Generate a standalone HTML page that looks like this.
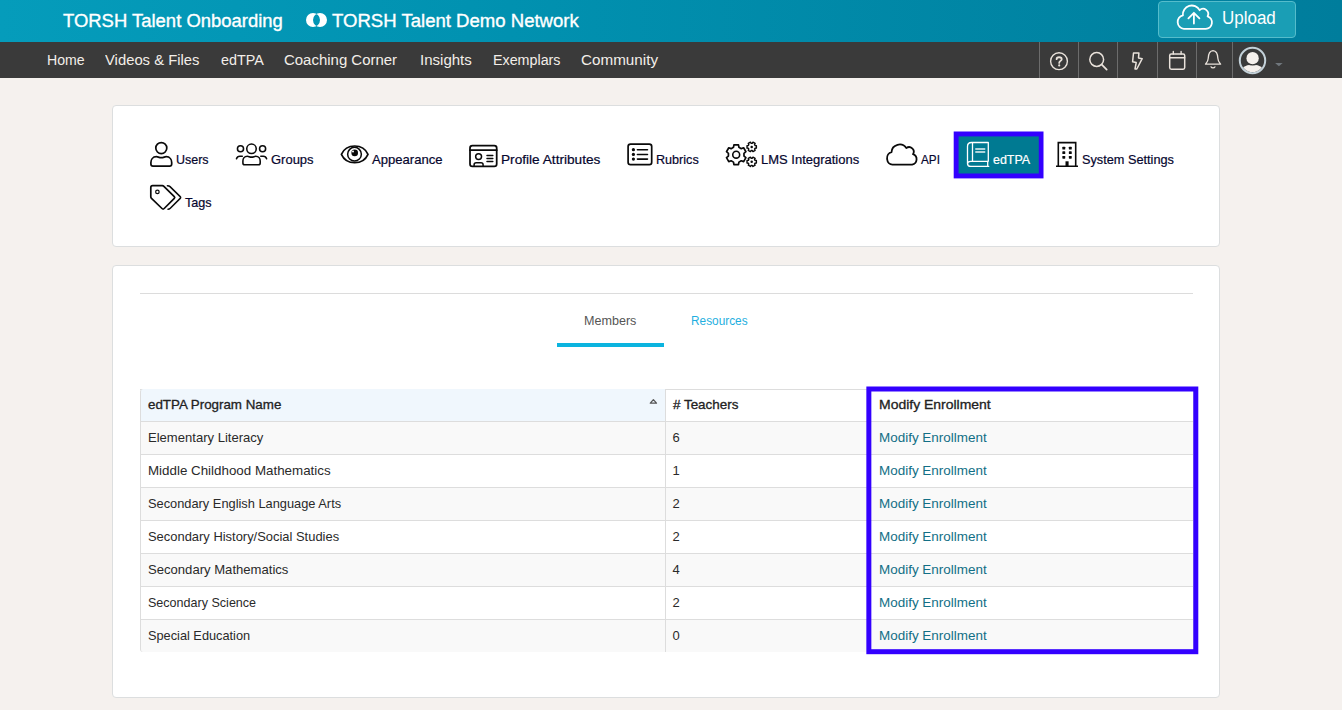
<!DOCTYPE html>
<html><head><meta charset="utf-8"><title>TORSH Talent</title>
<style>
html,body{margin:0;padding:0}
body{width:1342px;height:710px;overflow:hidden;position:relative;background:#f5f1ee;font-family:"Liberation Sans",sans-serif}
.abs,.t,svg{position:absolute}
.t{white-space:pre;transform-origin:0 0}
#top{left:0;top:0;width:1342px;height:42px;background:linear-gradient(90deg,#059cbb 0%,#0192b1 35%,#007d9c 100%)}
#nav{left:0;top:42px;width:1342px;height:36px;background:#3a3a3a}
.card{background:#fff;border:1px solid #dcdedf;border-radius:4px;box-sizing:border-box}
#c1{left:112px;top:105px;width:1108px;height:142px}
#c2{left:112px;top:265px;width:1108px;height:433px}
#upload{left:1158px;top:1px;width:138px;height:37px;box-sizing:border-box;background:#1a9eb5;border:1px solid #55bccb;border-radius:4px}
.vd{top:42px;width:1px;height:36px;background:#6c6c6c}
#hr{left:140px;top:293px;width:1053px;height:1px;background:#dcdcdc}
#tabu{left:557px;top:343px;width:107px;height:4px;background:#0bb4df}
#sel{left:954px;top:132px;width:90px;height:47px;box-sizing:border-box;background:#0a7f95;border:4px solid #3407f5}
#hl{left:867px;top:387px;width:332px;height:267px;box-sizing:border-box;border:4px solid #3407f5}
.row{left:140px;width:1053px;height:33px;box-sizing:border-box;border-top:1px solid #ddd;border-left:1px solid #ddd}
.cv{width:1px;background:#ddd;top:389px;height:263px}
</style></head><body>
<div id="top" class="abs"></div>
<div id="nav" class="abs"></div>
<div id="upload" class="abs"></div>
<div class="abs vd" style="left:1039px"></div><div class="abs vd" style="left:1078px"></div><div class="abs vd" style="left:1117px"></div>
<div class="abs vd" style="left:1157px"></div><div class="abs vd" style="left:1196px"></div><div class="abs vd" style="left:1232px"></div>
<div id="c1" class="abs card"></div>
<div id="c2" class="abs card"></div>
<div id="hr" class="abs"></div>
<div id="tabu" class="abs"></div>
<!-- table -->
<div class="abs" style="left:140px;top:389px;width:1053px;height:32px;background:#fff;border-top:1px solid #ddd;box-sizing:border-box"></div>
<div class="abs" style="left:140px;top:389px;width:525px;height:32px;background:#f0f7fd;border-left:1px solid #ddd;border-top-left-radius:3px;box-sizing:border-box"></div>
<div class="abs row" style="top:421px;background:#f9f9f9"></div>
<div class="abs row" style="top:454px;background:#fff"></div>
<div class="abs row" style="top:487px;background:#f9f9f9"></div>
<div class="abs row" style="top:520px;background:#fff"></div>
<div class="abs row" style="top:553px;background:#f9f9f9"></div>
<div class="abs row" style="top:586px;background:#fff"></div>
<div class="abs row" style="top:619px;background:#f9f9f9;border-bottom-left-radius:3px"></div>
<div class="abs cv" style="left:665px"></div>
<div class="abs cv" style="left:868px"></div>
<div class="abs cv" style="left:1193px"></div>
<svg class="abs" style="left:0;top:0" width="1342" height="710" viewBox="0 0 1342 710" fill="none" stroke-linecap="round" stroke-linejoin="round">
<rect x="953.7" y="131.5" width="89.8" height="46.9" fill="#3300ff"/><rect x="958.6" y="136.4" width="80.2" height="37.1" fill="#007a92"/>
<rect x="868.85" y="389" width="326.95" height="262.7" stroke="#3300ff" stroke-width="5" stroke-linejoin="miter"/>
<path fill="#fff" fill-rule="evenodd" d="M306 20a7 7 0 1 0 14 0a7 7 0 1 0 -14 0Z M313 20a7 7 0 1 0 14 0a7 7 0 1 0 -14 0Z"/>
<g stroke="#fff" stroke-width="1.8"><path d="M1183.9 28.8 A6.3 6.8 0 0 1 1182.9 15.3 A8.9 8.9 0 0 1 1199.6 10.2 A5.1 5.1 0 0 1 1207.6 16.3 A6.2 6.4 0 0 1 1205.8 28.8 Z"/><path d="M1193.9 23.6 V13 M1188.4 18.3 L1193.9 12.8 L1199.4 18.3"/></g>
<g stroke="#e9e2db" stroke-width="1.4">
<circle cx="1059" cy="61.2" r="8.4"/>
<path d="M1056.6 59.2 C1056.6 56.6 1061.7 56.6 1061.7 59.2 C1061.7 60.9 1059.2 60.9 1059.2 62.9" stroke-width="1.8"/>
<circle cx="1059.2" cy="65.4" r="1.1" fill="#e9e2db" stroke="none"/>
<circle cx="1096.7" cy="59.5" r="6.9" stroke-width="1.5"/><path d="M1101.8 64.6 L1106.7 69.7" stroke-width="1.7"/>
<path d="M1133.5 53 H1138.9 L1138.5 57.9 L1142.2 58.7 L1136.8 69 H1135 L1136.2 62.6 L1132.6 61.8 Z" stroke-width="1.5"/>
<rect x="1169.7" y="54" width="15" height="15.2" rx="1.6" stroke-width="1.5"/><path d="M1169.7 57.7 H1184.7 M1173.3 51.4 V54 M1181.1 51.4 V54"/>
<path d="M1213 50.6 C1208.5 51 1208.3 55.5 1208.2 58.5 C1208.1 61.5 1206.5 63 1205.5 64.2 H1220.6 C1219.6 63 1218 61.5 1217.9 58.5 C1217.8 55.5 1217.6 51 1213 50.6 Z" stroke-width="1.3"/>
<path d="M1211 66.8 C1211.6 68.3 1214.4 68.3 1215 66.8" stroke-width="1.2"/>
</g>
<defs><clipPath id="av"><circle cx="1252.5" cy="60.5" r="11.5"/></clipPath></defs>
<circle cx="1252.5" cy="60.5" r="12.7" stroke="#c3d1d9" stroke-width="2"/>
<g clip-path="url(#av)"><ellipse cx="1252.5" cy="73.6" rx="13.5" ry="9" fill="#f5f0ec"/><circle cx="1252.6" cy="58.2" r="7.4" fill="#3a3a3a"/><circle cx="1252.6" cy="58.2" r="6.15" fill="#f5f0ec"/></g>
<path d="M1275.1 62.9 H1282.7 L1278.9 66.2 Z" fill="#70777d"/>
<g stroke="#0a0a0a" stroke-width="1.7">
<circle cx="161.3" cy="148.1" r="5.5"/>
<path d="M156.5 156.7 C152.4 156.7 150.9 160 150.9 162.5 V164.1 C150.9 165.4 151.7 166.2 153 166.2 H169.6 C170.9 166.2 171.7 165.4 171.7 164.1 V162.5 C171.7 160 170.200 156.700 166.100 156.700 C164.700 156.700 163.500 157.700 161.300 157.700 C159.100 157.700 157.900 156.700 156.500 156.700 Z"/>
<g stroke-width="1.55"><circle cx="251.5" cy="148.8" r="4.75"/><circle cx="240.5" cy="148.7" r="3.05"/><circle cx="262.6" cy="148.7" r="3.05"/>
<path d="M247.400 156.300 C244.300 156.300 242.900 158.800 242.900 161 V162.900 C242.900 164 243.600 164.700 244.700 164.700 H258.400 C259.500 164.700 260.200 164 260.200 162.900 V161 C260.200 158.800 258.800 156.300 255.700 156.300 C254.500 156.300 253.400 157.100 251.550 157.100 C249.700 157.100 248.600 156.300 247.400 156.300 Z"/>
<path d="M236.500 158.700 C237 157 238.300 156.200 239.800 156.200 H242.300 M266.600 158.700 C266.100 157 264.800 156.200 263.300 156.200 H260.800"/></g>
<g stroke-width="1.7"><path d="M341.400 154.300 C343.600 149.400 348.600 146 354.700 146 C360.800 146 365.800 149.400 368 154.300 C365.800 159.200 360.800 162.700 354.700 162.700 C348.600 162.700 343.600 159.200 341.400 154.300 Z"/><circle cx="354.500" cy="154.200" r="6.850" stroke-width="1.500"/></g>
<circle cx="354.700" cy="152.900" r="3.300" fill="#0a0a0a" stroke="none"/><circle cx="353" cy="151.400" r="1" fill="#fff" stroke="none"/>
<g stroke-width="1.75"><rect x="470" y="145.500" width="26.700" height="20.900" rx="2.400"/><path d="M470 150.200 H496.700"/>
<circle cx="478.600" cy="156.600" r="2.950" stroke-width="1.500"/><path d="M474.100 166 V164.800 C474.100 163.400 475 162.800 476.200 162.800 H481 C482.200 162.800 483.100 163.400 483.100 164.800 V166" stroke-width="1.500"/>
<path d="M487 155.500 H492.800 M487 158.500 H492.800 M487 161.500 H492.800" stroke-width="1.500"/></g>
<g><rect x="628.100" y="144.100" width="23.600" height="20.600" rx="2.400"/>
<path d="M637.400 149.700 H647.500 M637.400 154.400 H647.500 M637.400 159.100 H647.500" stroke-width="1.550"/></g>
<g fill="#0a0a0a" stroke="none"><circle cx="633.400" cy="149.700" r="1.600"/><circle cx="633.400" cy="154.400" r="1.600"/><circle cx="633.400" cy="159.100" r="1.600"/></g>
<path d="M733.49 147.28 L733.93 144.81 L738.47 144.81 L738.91 147.28 L741.27 148.64 L743.64 147.79 L745.90 151.72 L743.98 153.34 L743.98 156.06 L745.90 157.68 L743.64 161.61 L741.27 160.76 L738.91 162.12 L738.47 164.59 L733.93 164.59 L733.49 162.12 L731.13 160.76 L728.76 161.61 L726.50 157.68 L728.42 156.06 L728.42 153.34 L726.50 151.72 L728.76 147.79 L731.13 148.64Z" stroke-width="1.700"/><circle cx="736.200" cy="154.700" r="3.450" stroke-width="1.600"/>
<path d="M752.15 143.33 L752.96 142.22 L755.13 143.47 L754.57 144.72 L755.02 145.50 L756.38 145.64 L756.38 148.16 L755.02 148.30 L754.57 149.08 L755.13 150.33 L752.96 151.58 L752.15 150.47 L751.25 150.47 L750.44 151.58 L748.27 150.33 L748.83 149.08 L748.38 148.30 L747.02 148.16 L747.02 145.64 L748.38 145.50 L748.83 144.72 L748.27 143.47 L750.44 142.22 L751.25 143.33Z" stroke-width="1.400"/><circle cx="751.700" cy="146.900" r="1.250" fill="#0a0a0a" stroke="none"/>
<path d="M752.15 158.23 L752.96 157.12 L755.13 158.37 L754.57 159.62 L755.02 160.40 L756.38 160.54 L756.38 163.06 L755.02 163.20 L754.57 163.98 L755.13 165.23 L752.96 166.48 L752.15 165.37 L751.25 165.37 L750.44 166.48 L748.27 165.23 L748.83 163.98 L748.38 163.20 L747.02 163.06 L747.02 160.54 L748.38 160.40 L748.83 159.62 L748.27 158.37 L750.44 157.12 L751.25 158.23Z" stroke-width="1.400"/><circle cx="751.700" cy="161.800" r="1.250" fill="#0a0a0a" stroke="none"/>
<path stroke-width="1.800" d="M892.6 164.6 A5.4 6.3 0 0 1 891.5 152.1 A8.1 8.1 0 0 1 906.3 148.1 A4.6 4.6 0 0 1 913 154.2 A5.4 5.4 0 0 1 912.1 164.6 Z"/>
<g stroke-width="1.600" stroke-linecap="butt" stroke-linejoin="miter"><path d="M1058.300 166.200 V142.600 H1075.700 V166.200 M1056 166.200 H1078"/></g>
<g fill="#0a0a0a" stroke="none"><rect x="1062.35" y="146.70" width="2.900" height="2.800" rx="0.600"/><rect x="1062.35" y="151.30" width="2.900" height="2.800" rx="0.600"/><rect x="1062.35" y="155.90" width="2.900" height="2.800" rx="0.600"/><rect x="1068.85" y="146.70" width="2.900" height="2.800" rx="0.600"/><rect x="1068.85" y="151.30" width="2.900" height="2.800" rx="0.600"/><rect x="1068.85" y="155.90" width="2.900" height="2.800" rx="0.600"/><rect x="1065.500" y="161.300" width="3.100" height="5" /></g>
<g><path d="M152.600 185.700 H162.300 C163 185.700 163.400 185.900 163.900 186.400 L174.300 196.600 C174.900 197.200 174.900 197.800 174.300 198.400 L164.200 208.500 C163.500 209.200 162.700 209.200 162 208.500 L151.500 198.400 C151 197.900 150.800 197.500 150.800 196.800 V187.500 C150.800 186.400 151.500 185.700 152.600 185.700 Z"/>
<path d="M167.400 185.700 C168.600 185.700 169.300 185.900 170 186.600 L180.200 196.600 C180.800 197.200 180.800 197.800 180.200 198.400 L170.300 208.300 C169.600 209 168.900 209.300 168 209.300" stroke-width="1.500"/>
<circle cx="157.400" cy="191.900" r="1.750" stroke-width="1.200"/></g>
</g>
<g stroke="#fff" stroke-width="1.300">
<path d="M972.500 142.500 V161.300 M988.300 161.300 V142.500 H971.500 C969 142.500 967.500 144 967.500 146.500 V163.400 C967.500 165.200 968.900 166.400 970.700 166.400 H988.700 M987.700 166.400 V161.300 H970.700 C968.900 161.300 967.500 162.500 967.500 163.900"/>
<path d="M975.800 149 H984.700 M975.800 152.100 H984.700" stroke-width="1.500" stroke="#e6f2f4"/></g>
<path d="M650.300 403.200 L653.400 399.600 L656.500 403.200 Z" stroke="#555" stroke-width="1.250"/>
</svg>
<span class="t" style="left:63.40px;top:11.0px;font-size:18px;line-height:20px;font-weight:400;color:#fff;-webkit-text-stroke:0.35px #fff;transform:scaleX(1.0249)">TORSH Talent Onboarding</span>
<span class="t" style="left:332.00px;top:11.0px;font-size:18px;line-height:20px;font-weight:400;color:#fff;-webkit-text-stroke:0.35px #fff;transform:scaleX(1.0308)">TORSH Talent Demo Network</span>
<span class="t" style="left:1222.30px;top:7.6px;font-size:18px;line-height:20px;font-weight:400;color:#fff;transform:scaleX(0.9431)">Upload</span>
<span class="t" style="left:46.90px;top:51.7px;font-size:14px;line-height:16px;font-weight:400;color:#f3eee9;transform:scaleX(1.0064)">Home</span>
<span class="t" style="left:105.30px;top:51.7px;font-size:14px;line-height:16px;font-weight:400;color:#f3eee9;transform:scaleX(1.0579)">Videos &amp; Files</span>
<span class="t" style="left:220.60px;top:51.7px;font-size:14px;line-height:16px;font-weight:400;color:#f3eee9;transform:scaleX(1.0248)">edTPA</span>
<span class="t" style="left:284.30px;top:51.7px;font-size:14px;line-height:16px;font-weight:400;color:#f3eee9;transform:scaleX(1.0686)">Coaching Corner</span>
<span class="t" style="left:419.60px;top:51.7px;font-size:14px;line-height:16px;font-weight:400;color:#f3eee9;transform:scaleX(1.0736)">Insights</span>
<span class="t" style="left:492.90px;top:51.7px;font-size:14px;line-height:16px;font-weight:400;color:#f3eee9;transform:scaleX(1.0206)">Exemplars</span>
<span class="t" style="left:581.00px;top:51.7px;font-size:14px;line-height:16px;font-weight:400;color:#f3eee9;transform:scaleX(1.0876)">Community</span>
<span class="t" style="left:176.30px;top:152.0px;font-size:13px;line-height:15px;font-weight:400;color:#06062e;-webkit-text-stroke:0.2px #06062e;transform:scaleX(0.9601)">Users</span>
<span class="t" style="left:271.10px;top:152.0px;font-size:13px;line-height:15px;font-weight:400;color:#06062e;-webkit-text-stroke:0.2px #06062e;transform:scaleX(0.9990)">Groups</span>
<span class="t" style="left:372.10px;top:152.0px;font-size:13px;line-height:15px;font-weight:400;color:#06062e;-webkit-text-stroke:0.2px #06062e;transform:scaleX(1.0053)">Appearance</span>
<span class="t" style="left:501.00px;top:152.0px;font-size:13px;line-height:15px;font-weight:400;color:#06062e;-webkit-text-stroke:0.2px #06062e;transform:scaleX(1.0501)">Profile Attributes</span>
<span class="t" style="left:656.20px;top:152.0px;font-size:13px;line-height:15px;font-weight:400;color:#06062e;-webkit-text-stroke:0.2px #06062e;transform:scaleX(0.9687)">Rubrics</span>
<span class="t" style="left:761.30px;top:152.0px;font-size:13px;line-height:15px;font-weight:400;color:#06062e;-webkit-text-stroke:0.2px #06062e;transform:scaleX(0.9992)">LMS Integrations</span>
<span class="t" style="left:920.60px;top:152.0px;font-size:13px;line-height:15px;font-weight:400;color:#06062e;-webkit-text-stroke:0.2px #06062e;transform:scaleX(0.9013)">API</span>
<span class="t" style="left:1081.70px;top:152.0px;font-size:13px;line-height:15px;font-weight:400;color:#06062e;-webkit-text-stroke:0.2px #06062e;transform:scaleX(0.9783)">System Settings</span>
<span class="t" style="left:992.60px;top:152.0px;font-size:13px;line-height:15px;font-weight:400;color:#fff;-webkit-text-stroke:0.2px #fff;transform:scaleX(0.9566)">edTPA</span>
<span class="t" style="left:185.10px;top:195.0px;font-size:13px;line-height:15px;font-weight:400;color:#06062e;-webkit-text-stroke:0.2px #06062e;transform:scaleX(0.9720)">Tags</span>
<span class="t" style="left:584.30px;top:314.0px;font-size:12.5px;line-height:14px;font-weight:400;color:#555;transform:scaleX(1.0059)">Members</span>
<span class="t" style="left:691.00px;top:314.0px;font-size:12.5px;line-height:14px;font-weight:400;color:#1fafe0;transform:scaleX(0.9473)">Resources</span>
<span class="t" style="left:147.90px;top:397.0px;font-size:13px;line-height:15px;font-weight:400;color:#222;-webkit-text-stroke:0.3px #222;transform:scaleX(1.0269)">edTPA Program Name</span>
<span class="t" style="left:672.80px;top:397.0px;font-size:13px;line-height:15px;font-weight:400;color:#222;-webkit-text-stroke:0.3px #222;transform:scaleX(1.0322)"># Teachers</span>
<span class="t" style="left:879.20px;top:397.0px;font-size:13px;line-height:15px;font-weight:400;color:#222;-webkit-text-stroke:0.3px #222;transform:scaleX(1.0736)">Modify Enrollment</span>
<span class="t" style="left:147.90px;top:430.0px;font-size:13px;line-height:15px;font-weight:400;color:#2a2a2a;transform:scaleX(1.0044)">Elementary Literacy</span>
<span class="t" style="left:672.50px;top:430.0px;font-size:13px;line-height:15px;font-weight:400;color:#2a2a2a;transform:scaleX(1.0000)">6</span>
<span class="t" style="left:879.20px;top:430.0px;font-size:13px;line-height:15px;font-weight:400;color:#126f86;transform:scaleX(1.0351)">Modify Enrollment</span>
<span class="t" style="left:147.90px;top:463.0px;font-size:13px;line-height:15px;font-weight:400;color:#2a2a2a;transform:scaleX(1.0272)">Middle Childhood Mathematics</span>
<span class="t" style="left:672.50px;top:463.0px;font-size:13px;line-height:15px;font-weight:400;color:#2a2a2a;transform:scaleX(1.0000)">1</span>
<span class="t" style="left:879.20px;top:463.0px;font-size:13px;line-height:15px;font-weight:400;color:#126f86;transform:scaleX(1.0351)">Modify Enrollment</span>
<span class="t" style="left:147.90px;top:496.0px;font-size:13px;line-height:15px;font-weight:400;color:#2a2a2a;transform:scaleX(0.9859)">Secondary English Language Arts</span>
<span class="t" style="left:672.50px;top:496.0px;font-size:13px;line-height:15px;font-weight:400;color:#2a2a2a;transform:scaleX(1.0000)">2</span>
<span class="t" style="left:879.20px;top:496.0px;font-size:13px;line-height:15px;font-weight:400;color:#126f86;transform:scaleX(1.0351)">Modify Enrollment</span>
<span class="t" style="left:147.90px;top:529.0px;font-size:13px;line-height:15px;font-weight:400;color:#2a2a2a;transform:scaleX(0.9943)">Secondary History/Social Studies</span>
<span class="t" style="left:672.50px;top:529.0px;font-size:13px;line-height:15px;font-weight:400;color:#2a2a2a;transform:scaleX(1.0000)">2</span>
<span class="t" style="left:879.20px;top:529.0px;font-size:13px;line-height:15px;font-weight:400;color:#126f86;transform:scaleX(1.0351)">Modify Enrollment</span>
<span class="t" style="left:147.90px;top:562.0px;font-size:13px;line-height:15px;font-weight:400;color:#2a2a2a;transform:scaleX(1.0068)">Secondary Mathematics</span>
<span class="t" style="left:672.50px;top:562.0px;font-size:13px;line-height:15px;font-weight:400;color:#2a2a2a;transform:scaleX(1.0000)">4</span>
<span class="t" style="left:879.20px;top:562.0px;font-size:13px;line-height:15px;font-weight:400;color:#126f86;transform:scaleX(1.0351)">Modify Enrollment</span>
<span class="t" style="left:147.90px;top:595.0px;font-size:13px;line-height:15px;font-weight:400;color:#2a2a2a;transform:scaleX(0.9650)">Secondary Science</span>
<span class="t" style="left:672.50px;top:595.0px;font-size:13px;line-height:15px;font-weight:400;color:#2a2a2a;transform:scaleX(1.0000)">2</span>
<span class="t" style="left:879.20px;top:595.0px;font-size:13px;line-height:15px;font-weight:400;color:#126f86;transform:scaleX(1.0351)">Modify Enrollment</span>
<span class="t" style="left:147.90px;top:628.0px;font-size:13px;line-height:15px;font-weight:400;color:#2a2a2a;transform:scaleX(0.9810)">Special Education</span>
<span class="t" style="left:672.50px;top:628.0px;font-size:13px;line-height:15px;font-weight:400;color:#2a2a2a;transform:scaleX(1.0000)">0</span>
<span class="t" style="left:879.20px;top:628.0px;font-size:13px;line-height:15px;font-weight:400;color:#126f86;transform:scaleX(1.0351)">Modify Enrollment</span>
</body></html>
